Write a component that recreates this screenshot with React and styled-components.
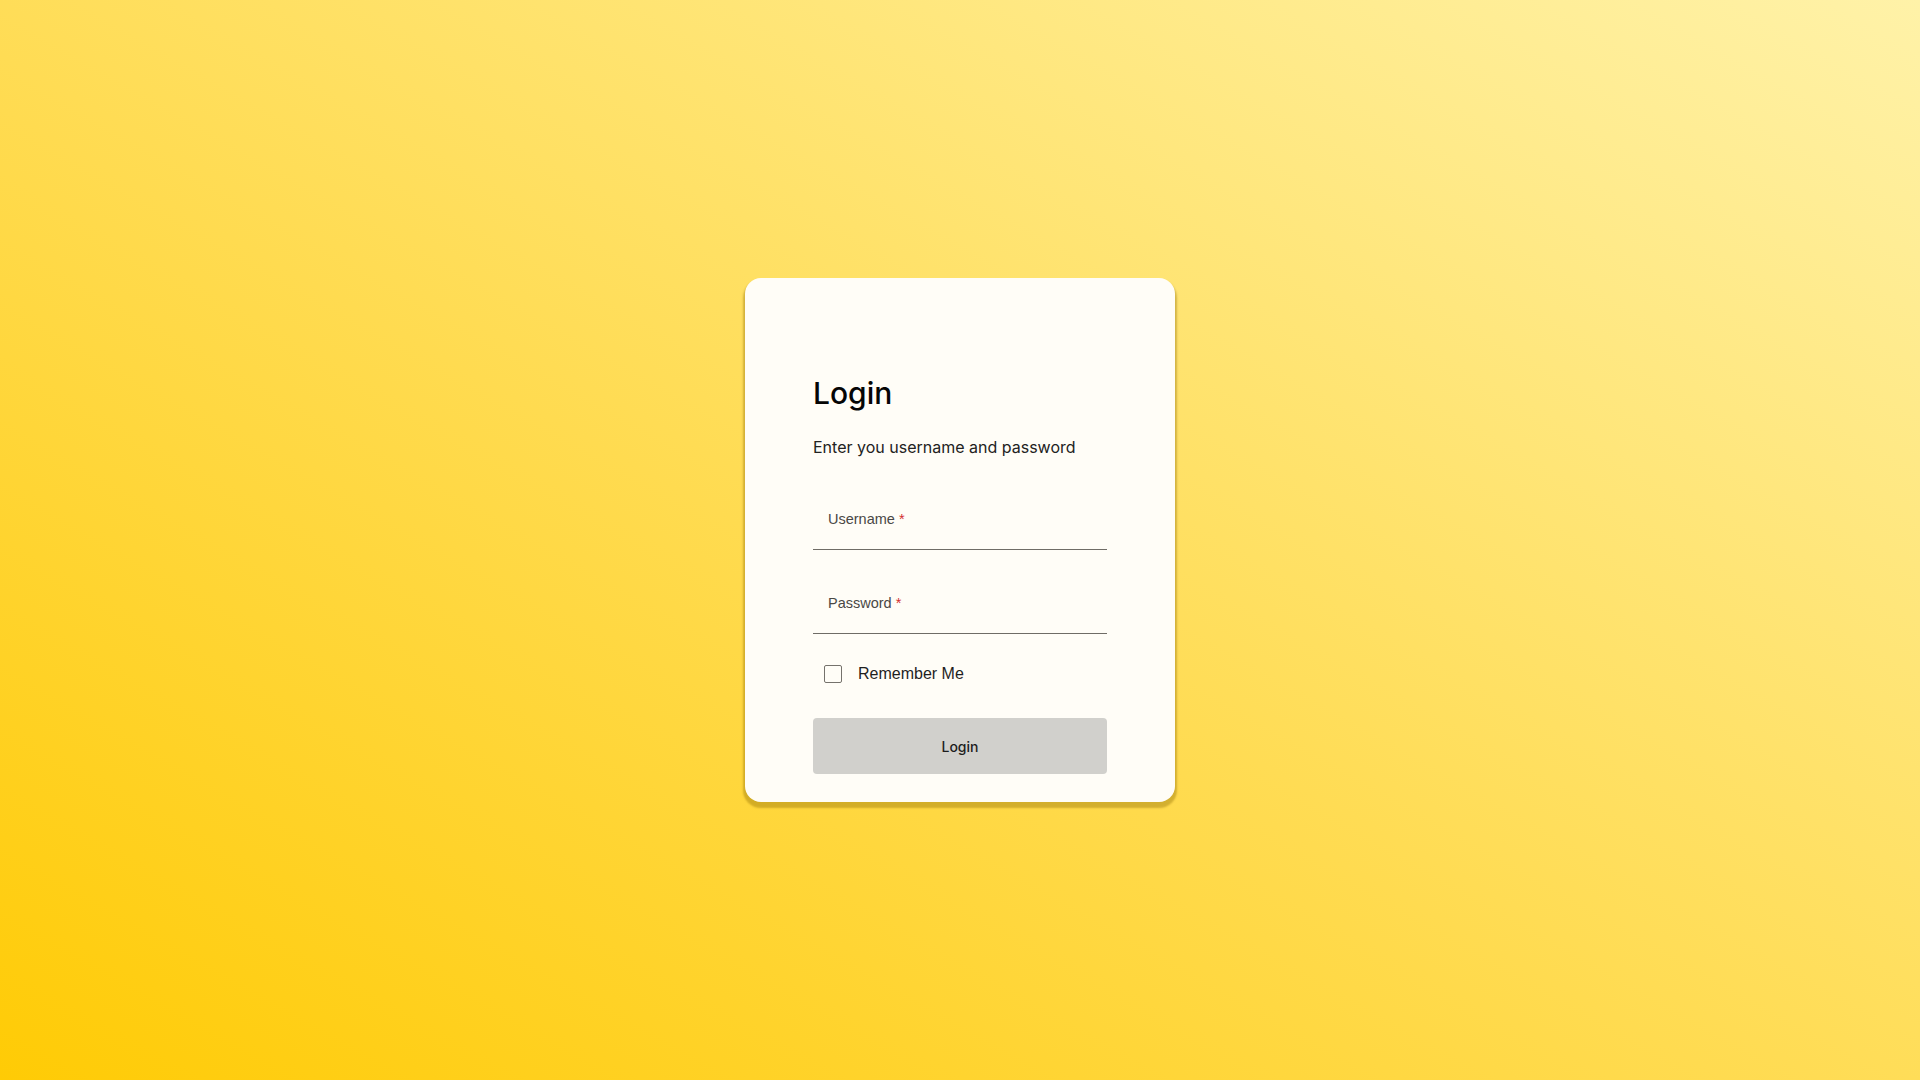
import styled, { createGlobalStyle } from "styled-components";

const GlobalStyle = createGlobalStyle`
  html, body {
    margin: 0;
    padding: 0;
  }
  body {
    font-family: Inter, "Liberation Sans", sans-serif;
  }
`;

const Field = ({ label, first }) => (
  <FieldBox first={first}>
    <FieldLabel>
      {label} <Required>*</Required>
    </FieldLabel>
    <FieldInput type={label === "Password" ? "password" : "text"} />
  </FieldBox>
);

const App = () => {
  return (
    <Page>
      <GlobalStyle />
      <Card>
        <Title>Login</Title>
        <Subtitle>Enter you username and password</Subtitle>
        <Field label="Username" first />
        <Field label="Password" />
        <RememberRow>
          <CheckBox type="checkbox" />
          <RememberText>Remember Me</RememberText>
        </RememberRow>
        <LoginButton>Login</LoginButton>
      </Card>
    </Page>
  );
};

export default App;

const Page = styled.div`
  width: 100vw;
  height: 100vh;
  display: flex;
  align-items: center;
  justify-content: center;
  background: linear-gradient(to top right, #ffcb05 0%, #ffdb50 45%, #fff2a8 100%);
`;

const Card = styled.div`
  width: 430px;
  box-sizing: border-box;
  padding: 97px 68px 28px 68px;
  background: #fffdf7;
  border-radius: 16px;
  box-shadow: 0 4px 2px 2px rgba(140, 105, 0, 0.38);
  display: flex;
  flex-direction: column;
`;

const Title = styled.h1`
  margin: 0;
  font-family: Inter, sans-serif;
  font-size: 30px;
  font-weight: 500;
  color: #050505;
  line-height: 36px;
`;

const Subtitle = styled.p`
  margin: 24px 0 0;
  font-family: Inter, sans-serif;
  font-size: 16px;
  color: #222;
  line-height: 24px;
`;

const FieldBox = styled.label`
  display: flex;
  flex-direction: column;
  border-bottom: 1px solid #6f6c66;
  height: 56px;
  box-sizing: border-box;
  padding: 18px 15px 0;
  margin-top: ${({ first }) => (first ? "35px" : "28px")};
`;

const FieldLabel = styled.span`
  font-family: "Liberation Sans", Arial, sans-serif;
  font-size: 14.5px;
  color: #4a4845;
  line-height: 14px;
`;

const Required = styled.span`
  color: #d32f2f;
`;

const FieldInput = styled.input`
  border: none;
  outline: none;
  background: transparent;
  padding: 0;
  font-size: 16px;
  height: 22px;
`;

const RememberRow = styled.div`
  display: flex;
  align-items: center;
  gap: 16px;
  padding-left: 11px;
  margin-top: 24px;
  height: 32px;
`;

const CheckBox = styled.input`
  appearance: none;
  width: 18px;
  height: 18px;
  margin: 0;
  border: 1.5px solid #75726c;
  border-radius: 2px;
  box-sizing: border-box;
  background: transparent;
`;

const RememberText = styled.span`
  font-family: "Liberation Sans", Arial, sans-serif;
  font-size: 16px;
  color: #1f1f1f;
`;

const LoginButton = styled.button`
  margin-top: 28px;
  height: 56px;
  width: 100%;
  border: none;
  border-radius: 4px;
  background: #d1d0cc;
  font-family: Inter, sans-serif;
  font-size: 14px;
  font-weight: 500;
  color: #1d1d1d;
`;
